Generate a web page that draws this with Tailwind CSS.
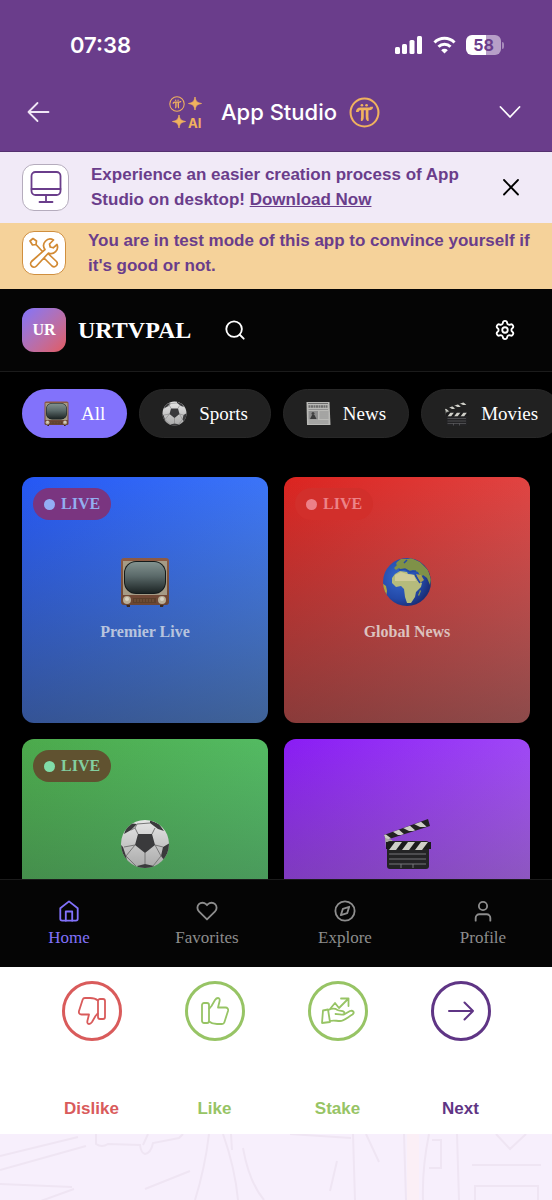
<!DOCTYPE html>
<html lang="en">
<head>
<meta charset="utf-8">
<meta name="viewport" content="width=device-width, initial-scale=1">
<title>App Studio - URTVPAL</title>
<script src="https://cdn.jsdelivr.net/npm/@tailwindcss/browser@4"></script>
</head>
<body class="bg-[#f7effc]">
<svg class="absolute h-0 w-0" aria-hidden="true">
  <defs>
    <linearGradient id="screen" x1="0" y1="0" x2="0" y2="1"><stop offset="0" stop-color="#82928f"/><stop offset=".45" stop-color="#5b6a6a"/><stop offset="1" stop-color="#1c2424"/></linearGradient>
    <linearGradient id="wood" x1="0" y1="0" x2="0" y2="1"><stop offset="0" stop-color="#8d5b44"/><stop offset="1" stop-color="#6b4533"/></linearGradient>
    <linearGradient id="ballShade" x1="0" y1="0" x2="0" y2="1"><stop offset="0" stop-color="#e6e6e6"/><stop offset="1" stop-color="#a9a9a9"/></linearGradient>
    <radialGradient id="sea" cx=".35" cy=".4" r=".65"><stop offset="0" stop-color="#3569cf"/><stop offset=".7" stop-color="#2349a8"/><stop offset="1" stop-color="#1b2f78"/></radialGradient>
    <clipPath id="disc"><circle cx="25" cy="25" r="24"/></clipPath>
    <clipPath id="slateTop"><path d="M2 16 44 1l2 6L4 21z"/></clipPath>
    <clipPath id="slateBar"><path d="M5 23h43v8H5z"/></clipPath>
  </defs>
  <symbol id="tv" viewBox="0 0 50 50">
    <path d="M6 47h4v3H7zM40 47h4l-1 3h-3z" fill="#3d2a20"/>
    <rect x="1" y="1" width="48" height="47" rx="3" fill="url(#wood)"/>
    <path d="M3 4h44v34H3z" fill="#a59b86"/>
    <rect x="4" y="4" width="42" height="33" rx="12" fill="#141a1a"/>
    <rect x="5" y="5" width="40" height="31" rx="11" fill="url(#screen)"/>
    <rect x="13" y="41" width="23" height="5" fill="#5c3f2a"/>
    <path d="M15 42v3M18 42v3M21 42v3M24 42v3M27 42v3M30 42v3M33 42v3" stroke="#7a5940" stroke-width="1"/>
    <circle cx="7" cy="43" r="4" fill="#b9ae97"/><circle cx="42" cy="43" r="4" fill="#b9ae97"/>
    <circle cx="7" cy="42" r="2" fill="#d9d2c2"/><circle cx="42" cy="42" r="2" fill="#d9d2c2"/>
  </symbol>
  <symbol id="ball" viewBox="0 0 50 50">
    <circle cx="25" cy="25" r="24" fill="url(#ballShade)"/>
    <g clip-path="url(#disc)">
      <path d="M18 15h14l3 11-10 8-10-8zM8 4l9 1-6 6-7 4zM30 1l9 4 5 7-6-2-8-6zM0 25l3 3 3 9 1 5-7-4zM50 24l-7 4-2 9 3 4 6-5zM17 47l8-2 9 2-3 4H20z" fill="#3a3a3c"/>
      <path d="M18 15l-3-6M11 11l4-2 2-4M4 28l11-2M32 15l3-6M43 28l-8-2M25 34v11M6 37l10 10M41 37l-8 10M15 26l-9 11M35 26l6 11M17 5l13-1" fill="none" stroke="#777" stroke-width="1"/>
    </g>
  </symbol>
  <symbol id="globe" viewBox="0 0 50 50">
    <circle cx="25" cy="25" r="24" fill="url(#sea)"/>
    <g clip-path="url(#disc)">
      <path d="M15 5l4-3 7 0 3-1 9 4 8 8 3 9-1 6-3-7-4-3-2 2-3-5-5-2-4 1-3-2-4 1-3-2-3 2-2-2 3-3-1-1z" fill="#7f9148"/>
      <path d="M13 17l5-3 7 1 1 2 7 1 3 6 4 2-1 4-5 5-1 5-4 6-4 0-2-6-1-8-3-3-5 1-4-4 0-5z" fill="#b5bb7c"/>
      <path d="M13 18l6-3 6 2 7 1 2 6-21 0z" fill="#d0cb98"/>
      <path d="M34 17l5 1 3 5-4 3z" fill="#a79f57"/>
      <path d="M37 36l1-3 1 1-2 5-1-1z" fill="#8c9c4f"/>
      <path d="M0 26l4 3 1 5-1 6-4-4z" fill="#b2a33f"/>
      <path d="M17 13l6-1 5 3 6-1M33 18l5 8M22 6l3-3" fill="none" stroke="#2349a8" stroke-width="1.5"/>
    </g>
  </symbol>
  <symbol id="clap" viewBox="0 0 50 50">
    <path d="M2 16 46 0l2 7L4 21z" fill="#222"/>
    <g clip-path="url(#slateTop)"><path d="M2 14l8 6-6 3-5-4zM15 9l8 7h-7l-8-5zM26 5l8 7h-7l-8-4zM37 1l8 7h-7l-8-4z" fill="#cfcfc8"/></g>
    <path d="M3 19l7 2 5 8H4z" fill="#a8aaa2"/>
    <rect x="5" y="22" width="42" height="28" rx="3" fill="#232325"/>
    <path d="M4 23h45v7H4z" fill="#1b1b1c"/>
    <g clip-path="url(#slateBar)"><path d="M7 31l6-8h7l-6 8zM20 31l6-8h7l-6 8zM33 31l6-8h7l-6 8z" fill="#cfcfc8"/></g>
    <path d="M7 35h37M7 40h37M7 45h37M19 45v4M31 45v4" stroke="#77777a" stroke-width="1" fill="none"/>
  </symbol>
  <symbol id="paper" viewBox="0 0 50 50">
    <path d="M1 2h46l2 46H2z" fill="#b9b9b6"/>
    <path d="M4 5h40" stroke="#6b6b6b" stroke-width="2"/>
    <path d="M5 11h38" stroke="#6d6d6d" stroke-width="5" stroke-dasharray="4 1"/>
    <path d="M5 17h39M27 22h18M27 26h18M27 30h18M27 34h18M5 40h40M5 44h40" stroke="#909090" stroke-width="2"/>
    <rect x="5" y="20" width="19" height="17" fill="#8d8d8d"/><circle cx="14" cy="25" r="3" fill="#444"/><path d="M8 36l4-8h5l4 8z" fill="#3c3c3c"/>
  </symbol>
  <symbol id="pi" viewBox="0 0 30 30">
    <circle cx="15" cy="15" r="13.5" fill="none" stroke="currentColor" stroke-width="2"/>
    <path d="M8 14.500c0-2 1-3 3-3h8.500c1.500 0 2.500-.5 2.500-2M13 12v7c0 2-.5 3-1.500 3M17.500 12v7c0 2 .5 3 1.500 3" fill="none" stroke="currentColor" stroke-width="2.600"/>
    <circle cx="12.500" cy="8" r="1.300" fill="currentColor"/><circle cx="17" cy="8" r="1.300" fill="currentColor"/>
  </symbol>
</svg>

<div class="flex h-screen flex-col overflow-hidden">
  <header class="shrink-0 border-b border-[#55316f] bg-[#6a3d8b] text-white">
    <div class="flex items-center justify-between pt-[29px] pr-12 pl-[70px]">
      <span class="font-['Inter',sans-serif] text-[22px] leading-8 font-semibold">07:38</span>
      <div class="flex items-center gap-[10px]">
        <svg class="h-[18px] w-7" viewBox="0 0 28 18" fill="#fff" aria-label="Signal"><rect x="0" y="11" width="5" height="7" rx="1.500"/><rect x="7" y="8" width="5" height="10" rx="1.500"/><rect x="14.500" y="4" width="5" height="14" rx="1.500"/><rect x="22" y="0" width="5" height="18" rx="1.500"/></svg>
        <svg class="h-[18px] w-[23px]" viewBox="0 0 23 18" fill="none" stroke="#fff" stroke-width="3" aria-label="Wi-Fi"><path d="M1.500 6.500a14 14 0 0 1 20 0M5.500 10.800a8.500 8.500 0 0 1 12 0"/><path d="M11.500 17.500 8.200 14.200a4.700 4.700 0 0 1 6.600 0z" fill="#fff" stroke="none"/></svg>
        <div class="flex items-center">
          <span class="flex h-5 w-[35px] items-center justify-center rounded-md bg-linear-to-r from-white from-58% to-[#b79fc8] to-58% font-['Inter',sans-serif] text-base leading-5 font-bold text-[#6a3d8b]">58</span>
          <span class="ml-px h-[7px] w-[2px] rounded-r-full bg-[#a78bbb]"></span>
        </div>
      </div>
    </div>
    <div class="flex h-[90px] items-center justify-between px-[26px] pt-3">
      <button type="button" aria-label="Back"><svg class="h-6 w-6" viewBox="0 0 24 24" fill="none" stroke="#f0e6f6" stroke-width="1.800" stroke-linecap="round" stroke-linejoin="round"><path d="M22.500 12H2.500M11.500 3 2.500 12l9 9"/></svg></button>
      <div class="flex items-center">
        <svg class="h-9 w-9 text-[#f0b25e]" viewBox="0 0 36 36" fill="#f0b25e" aria-hidden="true">
          <use href="#pi" x="1" y="2" width="16" height="16"/>
          <path d="M27 3c.8 4.500 2 5.700 6.500 6.500-4.500.8-5.700 2-6.500 6.500-.8-4.500-2-5.700-6.500-6.500C25 8.700 26.200 7.500 27 3zM11 21c.8 4.500 2 5.700 6.500 6.500-4.500.8-5.700 2-6.500 6.500-.8-4.500-2-5.700-6.500-6.500C9 26.700 10.200 25.500 11 21z" stroke="#f0b25e" stroke-width=".8" stroke-linejoin="round"/>
          <text x="20" y="33.500" font-family="Inter, sans-serif" font-weight="700" font-size="13">AI</text>
        </svg>
        <h1 class="ml-[17px] font-['Inter',sans-serif] text-[22px] leading-8 font-medium">App Studio</h1>
        <svg class="ml-3 h-[31px] w-[31px] text-[#f0b25e]" aria-hidden="true"><use href="#pi"/></svg>
      </div>
      <button type="button" aria-label="Expand" class="mr-1"><svg class="h-6 w-6" viewBox="0 0 24 24" fill="none" stroke="#fff" stroke-width="1.800" stroke-linecap="round" stroke-linejoin="round"><path d="m2.500 7 9.500 10 9.500-10"/></svg></button>
    </div>
  </header>

  <section class="flex shrink-0 items-center bg-[#f1eaf7] px-[22px] pt-[10px] pb-[11px] font-['Liberation_Sans',sans-serif] text-[17px] leading-[25px] font-bold text-[#6a3d8b]">
    <div class="flex h-[47px] w-[47px] shrink-0 items-center justify-center rounded-xl border border-[#b5acbd] bg-white"><svg class="h-8 w-8" viewBox="0 0 32 32" fill="none" stroke="#6a3d8b" stroke-width="1.800" stroke-linecap="round" stroke-linejoin="round"><rect x="1.500" y="1" width="29" height="23" rx="4"/><path d="M1.500 18h29M16 24v7M9.500 31h13"/></svg></div>
    <p class="ml-[22px] w-[380px]">Experience an easier creation process of App Studio on desktop! <a href="#" class="underline">Download Now</a></p>
    <button type="button" aria-label="Close" class="ml-auto"><svg class="h-[35px] w-[35px]" viewBox="0 0 35 35" fill="none" stroke="#000" stroke-width="1.800" stroke-linecap="round"><path d="m9 10 14 14.500M23 10 9 24.500"/></svg></button>
  </section>

  <section class="flex shrink-0 items-center bg-[#f5d29a] pt-[5px] pr-4 pb-[11px] pl-[22px] font-['Liberation_Sans',sans-serif] text-[17px] leading-[25px] font-bold text-[#6a3d8b]">
    <div class="flex h-11 w-11 shrink-0 items-center justify-center rounded-xl border border-[#d08f3e] bg-white"><svg class="h-8 w-8" viewBox="0 0 32 32" fill="none" stroke="#d28a33" stroke-width="1.700" stroke-linecap="round" stroke-linejoin="round"><path d="M2 4 5 1.500 8.500 4 8 7.500 4.500 8zM8 7.500l6 6.500M29 7.500a6.500 6.500 0 0 1-8.500 8.500L8.500 29a3.200 3.200 0 0 1-5-4.500L17 12.500A6.500 6.500 0 0 1 25.500 3L21.500 7l.7 3 3 .8zM20.500 17l8 7.500a3.200 3.200 0 0 1-4.500 4.500l-8-8"/></svg></div>
    <p class="ml-[22px] min-w-0 flex-1">You are in test mode of this app to convince yourself if it's good or not.</p>
  </section>

  <div class="flex min-h-0 flex-1 flex-col bg-black font-['Liberation_Serif',serif] text-white">
    <div class="flex h-[83px] shrink-0 items-center border-b border-[#1b1b1b] bg-[#050505] px-[22px]">
      <div class="flex h-11 w-11 items-center justify-center rounded-xl bg-linear-to-br from-[#8272fb] to-[#e2595f] text-base font-bold">UR</div>
      <h2 class="ml-3 text-2xl font-bold">URTVPAL</h2>
      <button type="button" aria-label="Search" class="ml-[33px]"><svg class="h-[22px] w-[22px]" viewBox="0 0 24 24" fill="none" stroke="currentColor" stroke-width="2" stroke-linecap="round"><circle cx="11" cy="11" r="8.500"/><path d="m21.500 21.500-4.300-4.300"/></svg></button>
      <button type="button" aria-label="Settings" class="mr-[14px] ml-auto"><svg class="h-[22px] w-[22px]" viewBox="0 0 24 24" fill="none" stroke="currentColor" stroke-width="2" stroke-linecap="round" stroke-linejoin="round"><path d="M9.671 4.136a2.340 2.340 0 0 1 4.659 0 2.340 2.340 0 0 0 3.319 1.915 2.340 2.340 0 0 1 2.330 4.033 2.340 2.340 0 0 0 0 3.831 2.340 2.340 0 0 1-2.330 4.033 2.340 2.340 0 0 0-3.319 1.915 2.340 2.340 0 0 1-4.659 0 2.340 2.340 0 0 0-3.320-1.915 2.340 2.340 0 0 1-2.330-4.033 2.340 2.340 0 0 0 0-3.831A2.340 2.340 0 0 1 6.350 6.051a2.340 2.340 0 0 0 3.319-1.915"/><circle cx="12" cy="12" r="3"/></svg></button>
    </div>

    <main class="min-h-0 flex-1 overflow-hidden px-[22px]">
      <div class="-mr-[22px] flex gap-3 overflow-hidden pt-[17px] text-[19px] leading-7">
        <button type="button" class="flex h-[49px] shrink-0 items-center gap-3 rounded-full bg-[#8272fb] px-[22px]"><svg class="h-[25px] w-[25px]"><use href="#tv"/></svg>All</button>
        <button type="button" class="flex h-[49px] shrink-0 items-center gap-3 rounded-full border border-[#282828] bg-[#212121] px-[22px]"><svg class="h-[25px] w-[25px]"><use href="#ball"/></svg>Sports</button>
        <button type="button" class="flex h-[49px] shrink-0 items-center gap-3 rounded-full border border-[#282828] bg-[#212121] px-[22px]"><svg class="h-[25px] w-[25px]"><use href="#paper"/></svg>News</button>
        <button type="button" class="flex h-[49px] shrink-0 items-center gap-3 rounded-full border border-[#282828] bg-[#212121] px-[22px]"><svg class="h-[25px] w-[25px]"><use href="#clap"/></svg>Movies</button>
      </div>
      <div class="mt-[39px] grid grid-cols-2 gap-4 text-base leading-6 font-bold">
        <article class="relative flex aspect-square flex-col items-center justify-center gap-[13px] rounded-xl bg-[linear-gradient(to_top,rgba(45,50,50,0.5),transparent),linear-gradient(135deg,#2557f5,#5292fc)]">
          <span class="absolute top-[11px] left-[11px] flex h-8 items-center gap-[6px] rounded-full bg-[#7a3580] px-[11px] text-[#93aef0]"><i class="h-[11px] w-[11px] rounded-full bg-[#93aef5]"></i>LIVE</span>
          <svg class="h-[50px] w-[50px]"><use href="#tv"/></svg>
          <h3 class="text-[#b7c4de]">Premier Live</h3>
        </article>
        <article class="relative flex aspect-square flex-col items-center justify-center gap-[13px] rounded-xl bg-[linear-gradient(to_top,rgba(50,50,50,0.5),transparent),linear-gradient(135deg,#dc2420,#e76363)]">
          <span class="absolute top-[11px] left-[11px] flex h-8 items-center gap-[6px] rounded-full bg-[#d22f2b] px-[11px] text-[#ec8388]"><i class="h-[11px] w-[11px] rounded-full bg-[#ec8088]"></i>LIVE</span>
          <svg class="h-[50px] w-[50px]"><use href="#globe"/></svg>
          <h3 class="text-[#dcc2bf]">Global News</h3>
        </article>
        <article class="relative flex aspect-square flex-col items-center justify-center rounded-xl bg-[linear-gradient(to_top,rgba(40,50,45,0.5),transparent),linear-gradient(135deg,#4caa4c,#5bcb78)] pb-[37px]">
          <span class="absolute top-[11px] left-[11px] flex h-8 items-center gap-[6px] rounded-full bg-[#605230] px-[11px] text-[#83cfa0]"><i class="h-[11px] w-[11px] rounded-full bg-[#80dca8]"></i>LIVE</span>
          <svg class="h-[50px] w-[50px]"><use href="#ball"/></svg>
        </article>
        <article class="relative flex aspect-square flex-col items-center justify-center rounded-xl bg-[linear-gradient(to_top,rgba(80,70,80,0.6),transparent),linear-gradient(135deg,#8a1cf5,#b572fa)] pb-[37px]">
          <svg class="h-[50px] w-[50px]"><use href="#clap"/></svg>
        </article>
      </div>
    </main>

    <nav class="grid h-[88px] shrink-0 grid-cols-4 border-t border-[#1b1b1b] bg-[#050505] text-[17px] leading-6 text-[#8d8d8d]">
      <a href="#" class="flex flex-col items-center gap-1 pt-5 text-[#8272fb]"><svg class="h-[22px] w-[22px]" viewBox="0 0 24 24" fill="none" stroke="currentColor" stroke-width="2" stroke-linecap="round" stroke-linejoin="round"><path d="m2.500 9 9.500-7.500L21.500 9v11.500a2 2 0 0 1-2 2h-15a2 2 0 0 1-2-2z"/><path d="M8.500 22.500V12.500h7v10"/></svg>Home</a>
      <a href="#" class="flex flex-col items-center gap-1 pt-5"><svg class="h-[22px] w-[22px]" viewBox="0 0 24 24" fill="none" stroke="currentColor" stroke-width="2" stroke-linecap="round" stroke-linejoin="round"><path d="M20.840 4.610a5.500 5.500 0 0 0-7.780 0L12 5.670l-1.060-1.060a5.500 5.500 0 0 0-7.780 7.780L12 21.230l8.840-8.840a5.500 5.500 0 0 0 0-7.780z"/></svg>Favorites</a>
      <a href="#" class="flex flex-col items-center gap-1 pt-5"><svg class="h-[22px] w-[22px]" viewBox="0 0 24 24" fill="none" stroke="currentColor" stroke-width="2" stroke-linecap="round" stroke-linejoin="round"><circle cx="12" cy="12" r="10.500"/><path d="m16.600 7.400-2.200 6.900-6.900 2.200 2.200-6.900z"/></svg>Explore</a>
      <a href="#" class="flex flex-col items-center gap-1 pt-5"><svg class="h-[22px] w-[22px]" viewBox="0 0 24 24" fill="none" stroke="currentColor" stroke-width="2" stroke-linecap="round" stroke-linejoin="round"><path d="M20 22.500v-3a4 4 0 0 0-4-4H8a4 4 0 0 0-4 4v3"/><circle cx="12" cy="6.500" r="4.500"/></svg>Profile</a>
    </nav>
  </div>

  <section class="grid shrink-0 grid-cols-4 bg-white px-[30px] pt-[14px] pb-[13px] font-['Liberation_Sans',sans-serif] text-[17px] leading-6 font-bold">
    <button type="button" class="flex flex-col items-center gap-[56px] text-[#d95b5b]"><span class="flex h-[60px] w-[60px] items-center justify-center rounded-full border-3 border-current"><svg class="h-7 w-7" viewBox="0 0 28 28" fill="none" stroke="currentColor" stroke-width="1.800" stroke-linejoin="round"><rect x="20" y="2" width="7" height="20" rx="2"/><path d="M20 3.500C17 1 15 1 12 1H7c-1 0-2 .6-2.300 1.500L1 14c-.5 1.800.5 3.500 2.500 3.500H11l-1.500 6c-.5 2 0 3.500 1.500 3.500s2-.5 3-2l3.500-6 2.500-3"/></svg></span>Dislike</button>
    <button type="button" class="flex flex-col items-center gap-[56px] text-[#97c465]"><span class="flex h-[60px] w-[60px] items-center justify-center rounded-full border-3 border-current"><svg class="h-7 w-7" viewBox="0 0 28 28" fill="none" stroke="currentColor" stroke-width="1.800" stroke-linejoin="round"><rect x="1" y="6" width="7" height="20" rx="2"/><path d="M8 24.500C11 27 13 27 16 27h5c1 0 2-.6 2.300-1.500L27 14c.5-1.800-.5-3.500-2.500-3.500H17l1.500-6c.5-2 0-3.500-1.500-3.500s-2 .5-3 2L10.500 9 8 12"/></svg></span>Like</button>
    <button type="button" class="flex flex-col items-center gap-[56px] text-[#97c465]"><span class="flex h-[60px] w-[60px] items-center justify-center rounded-full border-3 border-current"><svg class="h-7 w-[34px]" viewBox="0 0 34 28" fill="none" stroke="currentColor" stroke-width="1.800" stroke-linecap="round" stroke-linejoin="round"><path d="m9 12 5-6 4 5 9.500-9.500M20 1.500h7.500V9M2 13.500l5-1 2 12.500-8 1zM7.500 13c4-2 6-2 9 0 3 1.500 7 0 7 3 0 2.500-5 1.500-9 1M23 17.500l6-3.500c3-1 5 1.500 2.500 3.500C27 20 23 24 19 24c-4 0-6-1-10 0"/></svg></span>Stake</button>
    <button type="button" class="flex flex-col items-center gap-[56px] text-[#5f3585]"><span class="flex h-[60px] w-[60px] items-center justify-center rounded-full border-3 border-current"><svg class="h-7 w-7" viewBox="0 0 28 28" fill="none" stroke="currentColor" stroke-width="2" stroke-linecap="round" stroke-linejoin="round"><path d="M2 14h24M17.500 5.500 26 14l-8.500 8.500"/></svg></span>Next</button>
  </section>

  <footer class="h-[66px] shrink-0 bg-[#f7effc]">
    <svg class="h-full w-full" viewBox="0 0 552 66" preserveAspectRatio="none" fill="none" stroke="#efe5f3" stroke-width="2" aria-hidden="true">
      <path d="M407 0h12v66h-12z" fill="#fbeff6" stroke="none"/>
      <path d="M0 22 78 3M0 36l86-24M0 50l72 3M38 68l36-13M96 0v10q6 4 12 0l32 1q1 8 5 9 6-1 8-11l26-5 4-4M148 0l-5 11M145 55l45-18M209 0q-4 34-14 66M223 0q12 34 15 66M231 0l1 16M243 14q6 34 21 52M290 0l61 4M353 0l2 66M337 27l-7 30M366 0l13 28M404 0l2 66M429 0q-7 34-6 66M432 6h9v28h-12M457 0l2 66M496 0l14 15L526 0M472 31h69M475 66V52h63v14"/>
    </svg>
  </footer>
</div>
</body>
</html>
